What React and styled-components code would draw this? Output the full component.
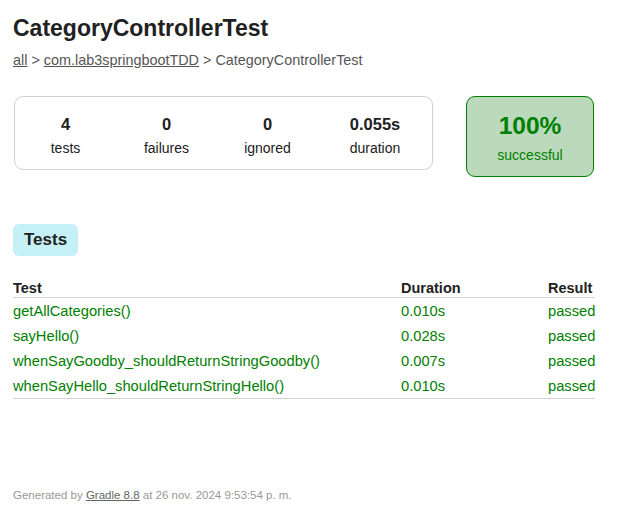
import React from "react";
import styled, { createGlobalStyle } from "styled-components";

const GlobalStyle = createGlobalStyle`
	body {
		margin: 0;
		padding: 0;
		background: #ffffff;
		font-family: "Liberation Sans", Arial, sans-serif;
		color: #212121;
	}
`;

const tests = [
	{ name: "getAllCategories()", duration: "0.010s", result: "passed" },
	{ name: "sayHello()", duration: "0.028s", result: "passed" },
	{ name: "whenSayGoodby_shouldReturnStringGoodby()", duration: "0.007s", result: "passed" },
	{ name: "whenSayHello_shouldReturnStringHello()", duration: "0.010s", result: "passed" },
];

const counters = [
	{ value: "4", label: "tests", width: 101 },
	{ value: "0", label: "failures", width: 101 },
	{ value: "0", label: "ignored", width: 101 },
	{ value: "0.055s", label: "duration", width: 114 },
];

function App() {
	return (
		<Content>
			<GlobalStyle />
			<Title>CategoryControllerTest</Title>
			<Breadcrumbs>
				<a href="#">all</a> &gt; <a href="#">com.lab3springbootTDD</a> &gt; CategoryControllerTest
			</Breadcrumbs>

			<Summary>
				<SummaryGroup>
					{counters.map((c) => (
						<InfoBox key={c.label} $width={c.width}>
							<Counter>{c.value}</Counter>
							<Label>{c.label}</Label>
						</InfoBox>
					))}
				</SummaryGroup>
				<SuccessRate>
					<Percent>100%</Percent>
					<SuccessLabel>successful</SuccessLabel>
				</SuccessRate>
			</Summary>

			<TabLink>Tests</TabLink>

			<Table>
				<HeadRow>
					<HeadCell>Test</HeadCell>
					<HeadCell>Duration</HeadCell>
					<HeadCell>Result</HeadCell>
				</HeadRow>
				<Body>
					{tests.map((t) => (
						<Row key={t.name}>
							<Cell>{t.name}</Cell>
							<Cell>{t.duration}</Cell>
							<Cell>{t.result}</Cell>
						</Row>
					))}
				</Body>
			</Table>

			<Footer>
				Generated by <a href="#">Gradle 8.8</a> at 26 nov. 2024 9:53:54 p. m.
			</Footer>
		</Content>
	);
}
export default App;

const Content = styled.div`
	padding: 14px 13px 0 13px;
	width: 633px;
	height: 520px;
	box-sizing: border-box;
`;

const Title = styled.h1`
	margin: 0;
	font-size: 23px;
	line-height: 28px;
	font-weight: bold;
	color: #212121;
`;

const Breadcrumbs = styled.div`
	margin-top: 10px;
	font-size: 14.4px;
	line-height: 16px;
	color: #555;

	> a {
		color: #555;
		text-decoration: underline;
	}
`;

const Summary = styled.div`
	display: flex;
	align-items: flex-start;
	margin-top: 28px;
	margin-left: 1px;
`;

const SummaryGroup = styled.div`
	display: flex;
	border: 1px solid #d0d0d0;
	border-radius: 9px;
	height: 72px;
`;

const InfoBox = styled.div`
	width: ${(p) => p.$width}px;
	text-align: center;
	padding-top: 18px;
`;

const Counter = styled.div`
	font-size: 16.5px;
	line-height: 18px;
	font-weight: bold;
	color: #212121;
`;

const Label = styled.div`
	margin-top: 7px;
	font-size: 14px;
	line-height: 16px;
	color: #212121;
`;

const SuccessRate = styled.div`
	margin-left: 33px;
	width: 126px;
	border: 1px solid #008000;
	border-radius: 9px;
	background-color: #bbd9bb;
	text-align: center;
	color: #008000;
	padding-top: 14px;
	box-sizing: content-box;
	height: 65px;
`;

const Percent = styled.div`
	font-size: 24.5px;
	line-height: 30px;
	font-weight: bold;
`;

const SuccessLabel = styled.div`
	margin-top: 6px;
	font-size: 14px;
	line-height: 16px;
`;

const TabLink = styled.div`
	display: inline-block;
	margin-top: 47px;
	padding: 0 11px;
	height: 32px;
	line-height: 32px;
	background-color: #c5f0f5;
	border-radius: 6px;
	font-size: 17px;
	font-weight: bold;
	color: #212121;
`;

const Table = styled.div`
	margin-top: 23px;
	width: 582px;
`;

const HeadRow = styled.div`
	display: grid;
	grid-template-columns: 388px 147px 47px;
	height: 18px;
	border-bottom: 1px solid #d0d0d0;
`;

const HeadCell = styled.div`
	font-size: 14.5px;
	line-height: 18px;
	font-weight: bold;
	color: #212121;
	white-space: nowrap;
`;

const Body = styled.div`
	border-bottom: 1px solid #d0d0d0;
`;

const Row = styled.div`
	display: grid;
	grid-template-columns: 388px 147px 47px;
	height: 25px;
	align-items: center;
`;

const Cell = styled.div`
	font-size: 14.7px;
	line-height: 16px;
	color: #008000;
	white-space: nowrap;
`;

const Footer = styled.div`
	margin-top: 89px;
	font-size: 11.5px;
	line-height: 14px;
	color: #999;

	> a {
		color: #666;
		text-decoration: underline;
	}
`;
